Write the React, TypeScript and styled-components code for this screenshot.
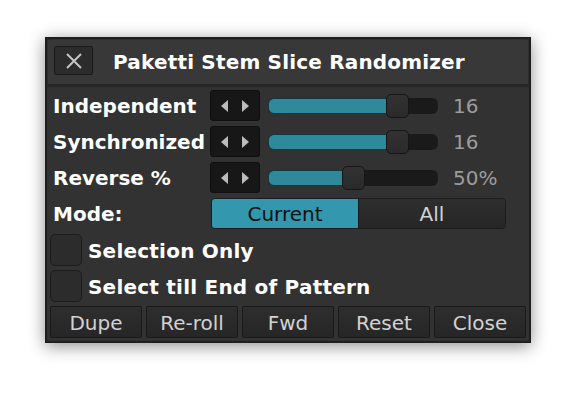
import React from "react";
import styled, { createGlobalStyle } from "styled-components";

const Global = createGlobalStyle`
  html, body { margin: 0; padding: 0; background: #ffffff; }
  body { font-family: "DejaVu Sans", "Liberation Sans", sans-serif; }
`;

const Page = styled.div`
  width: 576px;
  height: 396px;
  padding: 37px 0 0 45px;
  box-sizing: border-box;
`;

const Window = styled.div`
  width: 486px;
  height: 306px;
  box-sizing: border-box;
  border: 2px solid #1e1e1e;
  background: #323232;
  box-shadow: 0 3px 16px rgba(0, 0, 0, 0.45);
  display: flex;
  flex-direction: column;
`;

const TitleBar = styled.div`
  height: 48px;
  box-sizing: border-box;
  background: #383838;
  border: 1px solid #2e2e2e;
  border-bottom: 3px solid #262626;
  display: flex;
  align-items: flex-start;
  padding: 6px 0 0 6px;
  gap: 20px;
  flex-shrink: 0;
`;

const CloseBox = styled.div`
  width: 39px;
  height: 29px;
  box-sizing: border-box;
  background: #2c2c2c;
  border: 1px solid #1a1a1a;
  border-radius: 2px;
  display: flex;
  align-items: center;
  justify-content: center;
`;

const Title = styled.div`
  color: #ffffff;
  font-weight: bold;
  font-size: 20px;
  line-height: 32px;
  letter-spacing: 0.18px;
`;

const Content = styled.div`
  display: flex;
  flex-direction: column;
  padding: 3px;
  gap: 5px;
`;

const Row = styled.div`
  display: flex;
  align-items: center;
  height: 31px;
`;

const Label = styled.div`
  width: 160px;
  padding: 2px 0 0 3px;
  box-sizing: border-box;
  color: #ffffff;
  font-weight: bold;
  font-size: 20px;
  line-height: 29px;
  white-space: nowrap;
`;

const ArrowBox = styled.div`
  width: 50px;
  height: 31px;
  box-sizing: border-box;
  background: #171717;
  border: 1px solid #0f0f0f;
  border-radius: 3px;
  display: flex;
  align-items: center;
  justify-content: center;
  gap: 14px;
`;

const Track = styled.div`
  position: relative;
  width: 170px;
  height: 16px;
  margin-left: 8px;
  background: #1a1a1a;
  border-radius: 6px;
`;

const Fill = styled.div`
  position: absolute;
  left: 0;
  top: 0;
  bottom: 0;
  box-sizing: border-box;
  background: #2e8a9b;
  border: 1px solid #14383f;
  border-radius: 6px;
`;

const Thumb = styled.div`
  position: absolute;
  top: -4px;
  width: 23px;
  height: 24px;
  box-sizing: border-box;
  background: linear-gradient(#323232, #2a2a2a);
  border: 1px solid #161616;
  border-radius: 5px;
`;

const Value = styled.div`
  margin-left: 15px;
  padding-top: 2px;
  color: #9c9c9c;
  font-size: 20px;
  line-height: 29px;
`;

const Segmented = styled.div`
  display: flex;
  width: 295px;
  height: 31px;
  margin-left: 1px;
  box-sizing: border-box;
  border: 1px solid #1c1c1c;
  border-radius: 4px;
  overflow: hidden;
  background: #2a2a2a;
`;

const Segment = styled.div<{ $active?: boolean }>`
  flex: ${(p) => (p.$active ? "0 0 146px" : "1")};
  display: flex;
  align-items: center;
  justify-content: center;
  padding-top: 1px;
  font-size: 20px;
  color: ${(p) => (p.$active ? "#111111" : "#d2d2d2")};
  background: ${(p) => (p.$active ? "#3397ae" : "linear-gradient(#2e2e2e, #262626)")};
  border-left: ${(p) => (p.$active ? "none" : "1px solid #1a1a1a")};
`;

const CheckRow = styled.div<{ $mt?: number }>`
  display: flex;
  align-items: center;
  gap: 6px;
  height: 32px;
  margin-top: ${(p) => p.$mt ?? 0}px;
`;

const Check = styled.div`
  width: 32px;
  height: 32px;
  box-sizing: border-box;
  background: #2c2c2c;
  border: 1px solid #1c1c1c;
  border-radius: 5px;
`;

const CheckLabel = styled.div`
  padding-top: 2px;
  color: #ffffff;
  font-weight: bold;
  font-size: 20px;
  line-height: 30px;
  letter-spacing: 0.22px;
`;

const ButtonRow = styled.div`
  display: flex;
  gap: 4px;
  height: 32px;
  margin-top: -1px;
`;

const Button = styled.div`
  width: 92px;
  height: 32px;
  box-sizing: border-box;
  padding-top: 1px;
  background: linear-gradient(#2e2e2e, #262626);
  border: 1px solid #1a1a1a;
  border-radius: 2px;
  color: #d2d2d2;
  font-size: 20px;
  display: flex;
  align-items: center;
  justify-content: center;
`;

const Tri = ({ dir }: { dir: "l" | "r" }) => (
  <svg width="7" height="12" viewBox="0 0 7 12">
    <path d={dir === "l" ? "M7 0 L0 6 L7 12 Z" : "M0 0 L7 6 L0 12 Z"} fill="#bcbcbc" />
  </svg>
);

const Slider = ({ frac }: { frac: number }) => {
  const left = Math.round(frac * 147);
  return (
    <Track>
      <Fill style={{ width: left + 12 }} />
      <Thumb style={{ left }} />
    </Track>
  );
};

const rows = [
  { label: "Independent", frac: 0.8, value: "16" },
  { label: "Synchronized", frac: 0.8, value: "16" },
  { label: "Reverse %", frac: 0.5, value: "50%" },
];

export default function App() {
  return (
    <>
      <Global />
      <Page>
        <Window>
          <TitleBar>
            <CloseBox>
              <svg width="18" height="18" viewBox="0 0 18 18">
                <path d="M2 2 L16 16 M16 2 L2 16" stroke="#c4c4c4" strokeWidth="2" />
              </svg>
            </CloseBox>
            <Title>Paketti Stem Slice Randomizer</Title>
          </TitleBar>
          <Content>
            {rows.map((r) => (
              <Row key={r.label}>
                <Label>{r.label}</Label>
                <ArrowBox>
                  <Tri dir="l" />
                  <Tri dir="r" />
                </ArrowBox>
                <Slider frac={r.frac} />
                <Value>{r.value}</Value>
              </Row>
            ))}
            <Row>
              <Label>Mode:</Label>
              <Segmented>
                <Segment $active>Current</Segment>
                <Segment>All</Segment>
              </Segmented>
            </Row>
            <CheckRow>
              <Check />
              <CheckLabel>Selection Only</CheckLabel>
            </CheckRow>
            <CheckRow $mt={-1}>
              <Check />
              <CheckLabel>Select till End of Pattern</CheckLabel>
            </CheckRow>
            <ButtonRow>
              {["Dupe", "Re-roll", "Fwd", "Reset", "Close"].map((b) => (
                <Button key={b}>{b}</Button>
              ))}
            </ButtonRow>
          </Content>
        </Window>
      </Page>
    </>
  );
}
